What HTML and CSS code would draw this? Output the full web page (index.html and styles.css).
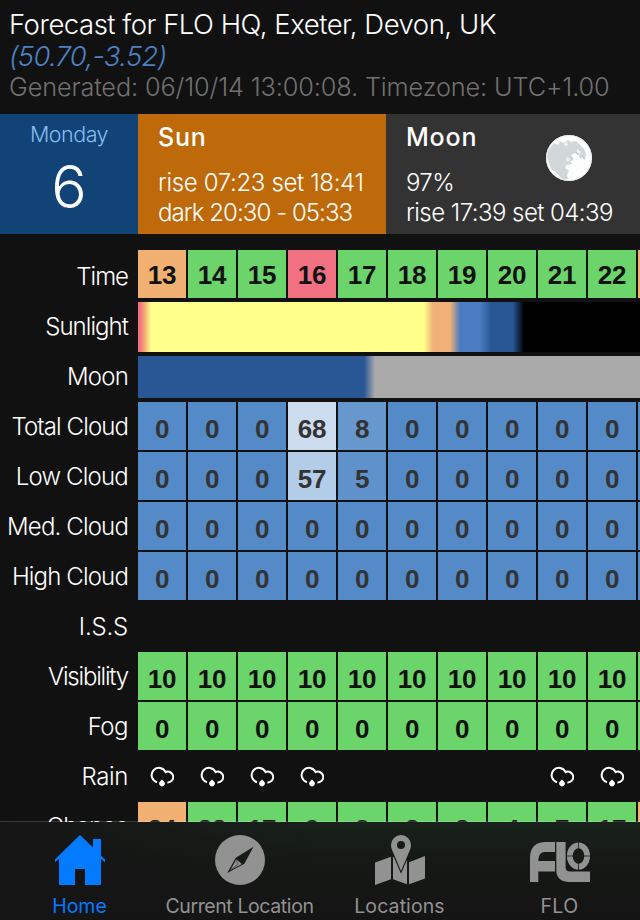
FILE: index.html
```
<!DOCTYPE html>
<html lang="en">
<head>
<meta charset="utf-8">
<title>Forecast for FLO HQ</title>
<link rel="stylesheet" href="styles.css">
</head>
<body>
<svg class="defs" aria-hidden="true">
  <symbol id="rain" viewBox="0 0 24 21">
    <path d="M7 16.2A7.3 7.3 0 1 1 15.6 6.1A5.4 5.4 0 1 1 17.4 16.4" fill="none" stroke="#fff" stroke-width="2"/>
    <path d="M12 13.6L14 15.6A2.8 2.8 0 1 1 10 15.6Z" fill="#fff"/>
  </symbol>
</svg>
<div class="screen">
  <header class="head">
    <h1 class="title">Forecast for FLO HQ, Exeter, Devon, UK</h1>
    <p class="coords">(50.70,-3.52)</p>
    <p class="generated">Generated: 06/10/14 13:00:08. Timezone: UTC+1.00</p>
  </header>

  <section class="summary">
    <div class="day">
      <div class="weekday">Monday</div>
      <div class="date">6</div>
    </div>
    <div class="panel sun">
      <h2>Sun</h2>
      <p class="sun-rise">rise 07:23 set 18:41</p>
      <p class="sun-dark">dark 20:30 - 05:33</p>
    </div>
    <div class="panel moon">
      <h2>Moon</h2>
      <p class="moon-phase">97%</p>
      <p class="moon-rise">rise 17:39 set 04:39</p>
      <svg class="moon-disc" viewBox="0 0 46 46">
        <clipPath id="disc"><circle cx="23" cy="23" r="23"/></clipPath>
        <circle cx="23" cy="23" r="23" fill="#fdfdfd"/>
        <g clip-path="url(#disc)" fill="#d2d8da">
          <path d="M4 13L8 8L12 10L14 6L18 8L22 5L25 7L30 6L34 10L38 14L40 19L39 25L36 22L34 24L33 20L29 18L25 20L27 23L24 26L26 29L21 30L19 33L23 36L21 40L22 44L17 45L14 42L10 37L6 35L3 29L1 22L2 16Z"/>
        </g>
        <path d="M18 9L21 7L22 10L19 11ZM21 22L24 24L22 27L20 25ZM31 14L35 17L34 19L31 17Z" fill="#f2f4f5"/>
        <path d="M30 17L32 20M36 20L38 24M27 23L25 26M19 34L17 36" stroke="#bcc5c8" stroke-width="1"/>
        <circle cx="23" cy="23" r="22.5" fill="none" stroke="#e6eaeb"/>
      </svg>
    </div>
  </section>

  <main class="forecast">
    <div class="labels">
      <div class="l-time">Time</div>
      <div class="l-sunlight">Sunlight</div>
      <div class="l-moon">Moon</div>
      <div class="l-total">Total Cloud</div>
      <div class="l-low">Low Cloud</div>
      <div class="l-med">Med. Cloud</div>
      <div class="l-high">High Cloud</div>
      <div class="l-iss">I.S.S</div>
      <div class="l-vis">Visibility</div>
      <div class="l-fog">Fog</div>
      <div class="l-rain">Rain</div>
      <div class="l-chance">Chance</div>
    </div>
    <div class="data">
      <div class="row time"><b class="warn">13</b><b>14</b><b>15</b><b class="now">16</b><b>17</b><b>18</b><b>19</b><b>20</b><b>21</b><b>22</b><b class="warn"></b></div>
      <div class="band sunlight"></div>
      <div class="band moonlight"></div>
      <div class="row cloud"><b>0</b><b>0</b><b>0</b><b class="c68">68</b><b class="c8">8</b><b>0</b><b>0</b><b>0</b><b>0</b><b>0</b><b></b></div>
      <div class="row cloud"><b>0</b><b>0</b><b>0</b><b class="c57">57</b><b class="c5">5</b><b>0</b><b>0</b><b>0</b><b>0</b><b>0</b><b></b></div>
      <div class="row cloud"><b>0</b><b>0</b><b>0</b><b>0</b><b>0</b><b>0</b><b>0</b><b>0</b><b>0</b><b>0</b><b></b></div>
      <div class="row cloud"><b>0</b><b>0</b><b>0</b><b>0</b><b>0</b><b>0</b><b>0</b><b>0</b><b>0</b><b>0</b><b></b></div>
      <div class="row empty"></div>
      <div class="row"><b>10</b><b>10</b><b>10</b><b>10</b><b>10</b><b>10</b><b>10</b><b>10</b><b>10</b><b>10</b><b></b></div>
      <div class="row"><b>0</b><b>0</b><b>0</b><b>0</b><b>0</b><b>0</b><b>0</b><b>0</b><b>0</b><b>0</b><b></b></div>
      <div class="row rain">
        <svg><use href="#rain"/></svg><svg><use href="#rain"/></svg><svg><use href="#rain"/></svg><svg><use href="#rain"/></svg>
        <i></i><i></i><i></i><i></i>
        <svg><use href="#rain"/></svg><svg><use href="#rain"/></svg>
      </div>
      <div class="row"><b class="warn">24</b><b>22</b><b>17</b><b>9</b><b>8</b><b>8</b><b>8</b><b>4</b><b>7</b><b>17</b><b class="warn"></b></div>
    </div>
  </main>

  <nav class="tabs">
    <a class="tab active">
      <svg viewBox="0 0 50 50"><path d="M25 0L38 12.5V4H46V20.5L50 24.5V27.5L46 23.7V50H30V34H20V50H4V23.7L0 27.3V24.2Z"/></svg>
      <span class="t-home">Home</span>
    </a>
    <a class="tab">
      <svg viewBox="0 0 50 50"><circle cx="25" cy="25" r="25"/><path d="M38.5 11.7L29.3 28.8L12.2 37.9L20.8 22.7Z" fill="#161b16"/><path d="M21.3 24.3L26.8 29L15.3 35.2Z"/><path d="M21.3 24.3L22.6 29.4L14 36.3" fill="none" stroke="#161b16" stroke-width=".5"/></svg>
      <span class="t-current">Current Location</span>
    </a>
    <a class="tab">
      <svg viewBox="0 0 50 50"><path d="M0 27.5L16 21.7V44.3L0 50ZM18 21.7L32 21V49.3L18 44.3ZM34 27.3L50 21V43.5L34 49.3Z"/><path d="M26 38.8L16.2 16V10H35.8V16Z" fill="#161b16"/><path fill-rule="evenodd" d="M26 0A10 10 0 0 1 36 10C36 13.5 34.5 16 33.5 18.3L26 36L18.5 18.3C17.5 16 16 13.5 16 10A10 10 0 0 1 26 0ZM26 6A4 4 0 1 0 26 14A4 4 0 1 0 26 6Z"/></svg>
      <span class="t-locations">Locations</span>
    </a>
    <a class="tab">
      <svg class="flo" viewBox="0 0 60 40"><path d="M0 40V16Q0 0 16 0H25V10H15Q8.3 10 8.3 19H25V29.5H8.3V40Z"/><path d="M26.3 0H35.6V25Q35.6 29.5 40 29.5H60V40H38Q26.3 39 26.3 28Z"/><ellipse cx="48.5" cy="14" rx="12.2" ry="14.6" fill="#161b16"/><ellipse cx="48.5" cy="14" rx="8.7" ry="10.7" fill="none" stroke="#929292" stroke-width="5.8"/><path d="M37 14H43M54 14H60M48.5 0V7M48.5 21V28" stroke="#161b16" stroke-width=".8"/></svg>
      <span class="t-flo">FLO</span>
    </a>
  </nav>
</div>
</body>
</html>
```
FILE: styles.css
```
* { box-sizing: border-box; margin: 0; padding: 0; }

body {
  background: #111;
  color: #fff;
  font-family: Inter, "Liberation Sans", sans-serif;
  font-weight: 300;
}

.defs { display: none; }

.screen {
  position: relative;
  width: 640px;
  height: 920px;
  overflow: hidden;
}

.head { height: 114px; padding: 8px 0 0 9px; white-space: nowrap; }
.title { font-size: 27.5px; font-weight: 300; line-height: 32px; letter-spacing: -.48px; }
.coords { font-size: 27.5px; font-style: italic; line-height: 32px; letter-spacing: -.72px; color: #4c82c4; }
.generated { font-size: 25.3px; line-height: 30px; letter-spacing: -.14px; color: #707070; }

.summary { display: flex; height: 120px; white-space: nowrap; }
.day { width: 138px; padding-top: 5px; background: #114376; text-align: center; }
.weekday { font-size: 21.5px; line-height: 31px; letter-spacing: -.5px; color: #88bbf2; }
.date { font-size: 59px; font-weight: 280; line-height: 74px; }
.panel { position: relative; padding: 8px 0 0 20px; font-size: 24px; line-height: 30px; }
.panel h2 { margin-bottom: 16px; font-size: 25px; font-weight: 500; line-height: 30px; letter-spacing: .8px; }
.sun { width: 248px; background: #be6a0a; }
.moon { flex: 1; background: #333; }
.sun-rise { letter-spacing: -.35px; }
.sun-dark { letter-spacing: -.93px; }
.moon-phase { letter-spacing: -.6px; }
.moon-rise { letter-spacing: -.55px; }
.moon-disc { position: absolute; left: 160px; top: 21px; width: 46px; height: 46px; }

.forecast { display: flex; padding-top: 16px; }
.labels { width: 138px; padding: 2px 10px 0 0; font-size: 24px; line-height: 50px; text-align: right; white-space: nowrap; }
.l-time { letter-spacing: -1px; }
.l-sunlight { letter-spacing: -.95px; }
.l-moon, .l-low, .l-chance { letter-spacing: -.8px; }
.l-med, .l-high { letter-spacing: -.85px; }
.l-total { letter-spacing: -.9px; }
.l-iss { letter-spacing: -.2px; }
.l-vis { letter-spacing: -1.2px; }
.l-fog { letter-spacing: -.5px; }
.l-rain { letter-spacing: -.4px; }

.data { width: 502px; overflow: hidden; }
.row { display: grid; grid-template-columns: repeat(11, 48px); gap: 2px; height: 48px; margin-bottom: 2px; }
.row b {
  background: #6bd56c;
  color: #111;
  font: bold 26px/54px "Liberation Sans", sans-serif;
  letter-spacing: -.3px;
  text-align: center;
  height: 48px;
}
.time { margin-bottom: 4px; }
.time b { line-height: 50px; }
.row .warn { background: #f0b072; }
.row .now { background: #f17082; }
.cloud b { background: #548ac7; color: #333; }
.cloud .c68 { background: #cddcee; }
.cloud .c57 { background: #b3cce7; }
.cloud .c8 { background: #6798cd; }
.cloud .c5 { background: #5f92cb; }

.band { margin-bottom: 4px; }
.sunlight {
  height: 50px;
  background: linear-gradient(90deg, #f17082 2px, #f0b072 7px, #ffff8b 13px, #ffff8b 286px, #f0b077 295px, #f0b077 312px, #4b7bc1 322px, #4b7bc1 342px, #295695 353px, #295695 375px, #000 386px);
}
.moonlight {
  height: 42px;
  background: linear-gradient(90deg, #295695 226px, #aaa 237px);
}

.rain { justify-items: center; }
.rain svg { width: 24px; height: 21px; margin-top: 14px; }

.tabs {
  position: absolute;
  left: 0;
  right: 0;
  bottom: 0;
  height: 99px;
  display: flex;
  border-top: 1px solid rgba(255, 255, 255, .18);
  background: linear-gradient(90deg, #151515 0, rgba(21, 21, 21, 0) 50%), linear-gradient(#18211a, #151815 45%, #141414);
  background-clip: padding-box;
}
.tab {
  flex: 1;
  display: flex;
  flex-direction: column;
  align-items: center;
  padding-top: 13px;
  color: #929292;
  fill: currentColor;
  font-size: 19.5px;
  font-weight: 380;
  line-height: 27px;
  white-space: nowrap;
}
.tab svg { flex: none; width: 50px; height: 50px; margin-bottom: 8px; }
.tab .flo { width: 60px; height: 40px; margin: 7px 0 11px; }
.active { color: #047aff; }
.tab span { margin-left: -1px; }
.t-home { letter-spacing: 0; }
.t-current { letter-spacing: -.4px; }
.t-locations { letter-spacing: .1px; }
.t-flo { letter-spacing: .4px; }
```
